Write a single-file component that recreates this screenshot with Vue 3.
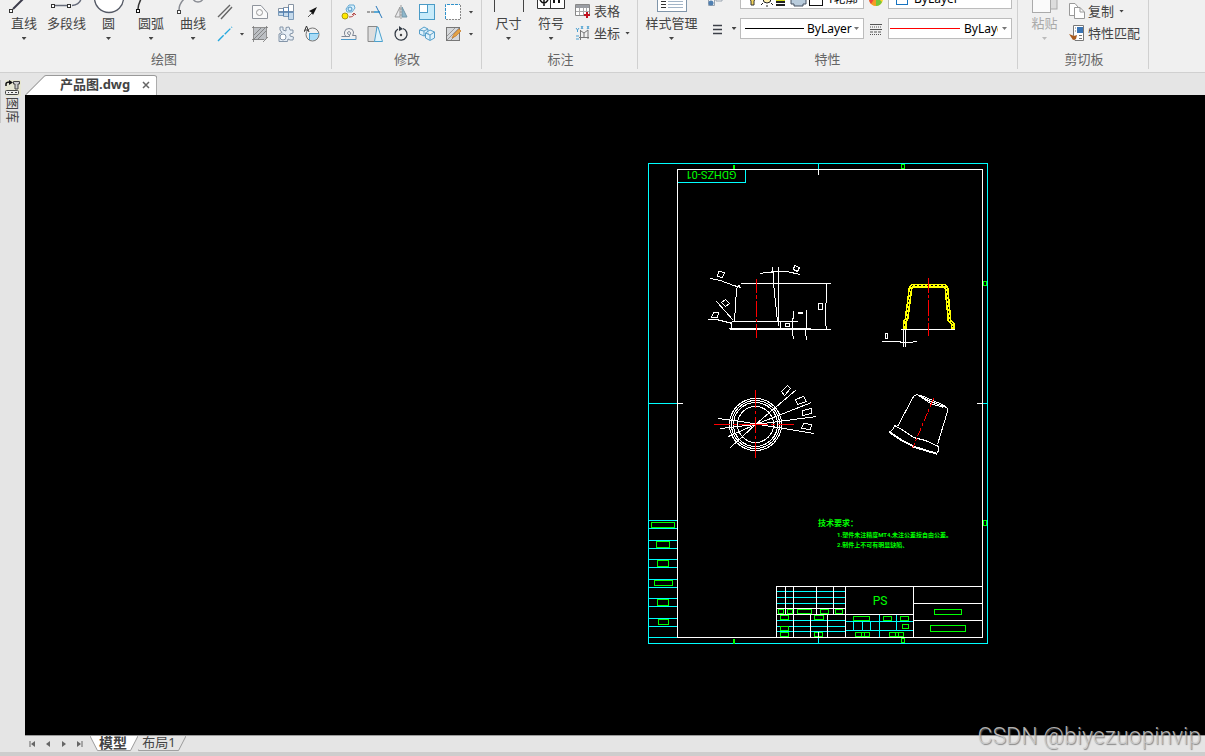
<script setup>
import { ref } from 'vue'

const lineWeight = ref('ByLayer')
const lineType = ref('ByLayer')
const color = ref('ByLayer')
const layer = ref('1轮廓')

const revisionLines = [520, 528, 540, 548, 559, 567, 579, 587, 598, 606, 618, 626, 637]

// Placeholder frames drawn for shrunken text: x, y, width, height
const frames = [
  [651, 522, 23, 5], [656, 541, 13, 6], [657, 560, 11, 6], [654, 580, 18, 5], [657, 599, 11, 6], [658, 619, 10, 5],
  [901, 164, 3, 4], [983, 281, 3, 4], [983, 520, 3, 5], [901, 638, 3, 4],
  [778, 609, 5, 4], [787, 609, 5, 4], [797, 609, 14, 4], [820, 609, 8, 4], [835, 609, 7, 4],
  [780, 615, 8, 4], [814, 615, 9, 4], [780, 626, 8, 4], [780, 632, 8, 4], [814, 632, 8, 4],
  [853, 616, 16, 4], [883, 616, 8, 4], [900, 616, 8, 4], [902, 624, 6, 4],
  [855, 632, 14, 4], [861, 632, 3, 4], [889, 632, 14, 4], [895, 632, 3, 4],
  [934, 609, 27, 5], [930, 625, 35, 6]
]
</script>

<template>
  <div class="app">
    <header class="ribbon">
      <section class="group draw">
        <div class="tools draw-tools">
          <button class="big" type="button">
            <svg class="big-icon" aria-hidden="true"><path d="M10 9 21 -2" stroke="#3b3b4a" stroke-width="2" /><rect x="9.500" y="9.500" width="3" height="3" transform="translate(-3 0)" fill="#fff" stroke="#333" /></svg>
            <span>直线</span><i class="arr"></i>
          </button>
          <button class="big" type="button">
            <svg class="big-icon" aria-hidden="true"><path d="M10 5.5H23M27 5.5C32 5 35 3 36 -1" fill="none" stroke="#666b7a" stroke-width="1.5" /><rect x="6.5" y="4.5" width="3" height="3" fill="#fff" stroke="#333" /><rect x="22.5" y="4.5" width="3" height="3" fill="#fff" stroke="#333" /></svg>
            <span>多段线</span>
          </button>
          <button class="big" type="button">
            <svg class="big-icon" aria-hidden="true"><circle cx="21" cy="-2" r="14.5" fill="#fff" stroke="#555a66" stroke-width="1.3" /></svg>
            <span>圆</span><i class="arr"></i>
          </button>
          <button class="big" type="button">
            <svg class="big-icon" aria-hidden="true"><path d="M9 9C9 6 10 3 12 -1" fill="none" stroke="#333" stroke-width="1.5" /><rect x="7.5" y="9.5" width="3" height="3" fill="#fff" stroke="#111" /></svg>
            <span>圆弧</span><i class="arr"></i>
          </button>
          <button class="big" type="button">
            <svg class="big-icon" aria-hidden="true"><path d="M6 10C6 5 8 2 11 -1M20 -1C22 3 28 3 30 -1" fill="none" stroke="#8a8d94" stroke-width="1.5" /><rect x="4.5" y="10.5" width="3" height="3" fill="#fff" stroke="#444" /></svg>
            <span>曲线</span><i class="arr"></i>
          </button>
          <div class="small-grid draw-grid">
            <button type="button" aria-label="平行线"><svg viewBox="0 0 16 16"><path d="M1 13 13 1M4 15 15 3" stroke="#666" stroke-width="1.4" /></svg></button>
            <span></span>
            <button type="button" aria-label="孔"><svg viewBox="0 0 16 16"><path d="M.5 1.500H9L15.500 9V14.500H.5Z" fill="#fafafa" stroke="#8f949c" /><circle cx="7.500" cy="8.500" r="3" fill="none" stroke="#999" /></svg></button>
            <button type="button" aria-label="轴"><svg viewBox="0 0 16 16"><path d="M.5 4.500H5.500V3.500H10.500V.5H15.500V7.500H.5Z" fill="#fff" stroke="#8794a3" /><path d="M.5 8.500H15.500V15.500H10.500V12.500H5.500V11.500H.5Z" fill="#c5daec" stroke="#7f9cb8" /><path d="M5.500 4V12M10.500 3V13M0 8H16" stroke="#5583b5" /></svg></button>
            <button type="button" aria-label="引线"><svg viewBox="0 0 16 16"><path d="M4 13 8 9" stroke="#555" /><path d="M13 3 5 7 7.500 8.500 9 11Z" fill="#111" /></svg></button>
            <button type="button" aria-label="构造线"><svg viewBox="0 0 16 16"><path d="M1 15 15 1" stroke="#23a8df" stroke-width="1.4" stroke-dasharray="8 1.500" /></svg></button>
            <button type="button" aria-label="更多绘图"><i class="arr"></i></button>
            <button type="button" aria-label="填充"><svg viewBox="0 0 16 16"><rect x="2" y="2" width="12" height="12" fill="#bcbfc3" /><path d="M1.500 0V16M14.500 0V12M0 1.500H16M0 13.500H12M2 9 9 2M2 13 13 2M6 13 14 5M11 16 16 11" stroke="#777" stroke-width=".8" /></svg></button>
            <button type="button" aria-label="齿轮"><svg viewBox="0 0 16 16"><path d="M2 1H5V4L8 5 8 1.500 11 1 12 4 15 4V7L12 8V10L15.500 11 15 14H12L10 13 9.500 15.500H1V8L4 6.500 2 4Z" fill="#e5edf5" stroke="#8495a8" /><circle cx="5" cy="11" r="3" fill="#fff" stroke="#8495a8" /></svg></button>
            <button type="button" aria-label="局部放大"><svg viewBox="0 0 16 16"><path d="M5 8H14V13Q9 16 5 13Z" fill="#a9dcf7" /><circle cx="8.500" cy="8.500" r="6.500" fill="none" stroke="#777" /><path d="M5 7.500H15M5.500 8V14" stroke="#49a1d1" /><path d="M0 6 2.500 0 5 6M1 4H4" fill="none" stroke="#333" /></svg></button>
          </div>
        </div>
        <h2>绘图</h2>
      </section>

      <section class="group modify">
        <div class="small-grid modify-grid">
          <button type="button" aria-label="复制对象"><svg viewBox="0 0 16 16"><path d="M6 8 5 5 8 1 13 1 14 4 11 8Z" fill="#d6effc" stroke="#65a9d2" /><circle cx="9" cy="5" r="2" fill="none" stroke="#4b94c4" /><circle cx="4" cy="12" r="3" fill="#ffe800" stroke="#a99b16" /><path d="M8 13Q13 13 13 10M11 11 13 9 15 11" fill="none" stroke="#b34747" /></svg></button>
          <button type="button" aria-label="延伸"><svg viewBox="0 0 16 16"><path d="M0 8H8" stroke="#555" stroke-dasharray="3 1" /><path d="M7 8H13" stroke="#2a93cf" stroke-width="1.500" /><path d="M9 2 15 14" stroke="#2878ba" /></svg></button>
          <button type="button" aria-label="镜像"><svg viewBox="0 0 16 16"><path d="M7 3V13H2Z" fill="#e9eaec" stroke="#999" /><path d="M9 3V13H14Z" fill="#8fb7cb" stroke="#7297a9" /><path d="M8 1V15" stroke="#999" stroke-dasharray="2 1" /></svg></button>
          <button type="button" aria-label="缩放"><svg viewBox="0 0 16 16"><rect x=".5" y=".5" width="15" height="15" fill="#c7ebfa" stroke="#4a9bc6" /><rect x=".5" y=".5" width="8" height="8" fill="#fff" stroke="#4a9bc6" /></svg></button>
          <button type="button" aria-label="选择"><svg viewBox="0 0 16 16"><path d="M1 1H15V15H1Z" fill="#fff" /><path d="M15.500 1V15.500H1" fill="none" stroke="#888" stroke-dasharray="2 1" /><path d="M.5 15V.5H15" fill="none" stroke="#2e91cb" stroke-dasharray="3 1" /></svg></button>
          <button type="button" aria-label="选择方式"><i class="arr"></i></button>
          <button type="button" aria-label="偏移"><svg viewBox="0 0 16 16"><path d="M.5 10.500H5Q3 9 3.500 6Q4 2.500 8 2.500Q12 2.500 12.500 6Q12.500 8 11.500 9.500H15V13.500H.5" fill="none" stroke="#7f8794" /><path d="M5 10.500H8.500V9Q6 8 6.500 6.500Q8 4.500 9.500 6.500Q10 8 8.500 9" fill="none" stroke="#7f8794" /><path d="M0 13.500H15" stroke="#4b98ca" /></svg></button>
          <button type="button" aria-label="拉伸"><svg viewBox="0 0 16 16"><path d="M1 .5H10V15.500H1Z" fill="#ddd" stroke="#888" /><path d="M10 1H11L15.500 15.500H7.500Z" fill="#dff3fc" stroke="#4ba0cd" /></svg></button>
          <button type="button" aria-label="旋转"><svg viewBox="0 0 16 16"><path d="M10 2.500A6 6 0 1 1 5 3" fill="none" stroke="#333b45" stroke-width="1.300" /><path d="M6 0 10 3 6 5Z" fill="#333b45" /><circle cx="8" cy="9" r="1.200" fill="#444" /></svg></button>
          <button type="button" aria-label="阵列"><svg viewBox="0 0 16 16"><path d="M.5 4 5 1 9 3V8L5 10 .5 8ZM.5 4 5 5 9 3M5 5V10" fill="#dff2fc" stroke="#579fc9" /><path d="M6.500 7 11 4 15.500 6V12L11 14.500 6.500 12ZM6.500 7 11 9 15.500 6M11 9V14" fill="#dff2fc" stroke="#579fc9" /></svg></button>
          <button type="button" aria-label="编辑填充"><svg viewBox="0 0 16 16"><rect x="1.500" y="1.500" width="13" height="13" fill="#d6d8da" stroke="#777" /><path d="M2 10 10 2M2 14 14 2M6 14 14 6" stroke="#999" /><path d="M7 12 9 8 14 3 16 5 11 10Z" fill="#e2a346" stroke="#c57827" stroke-width=".7" /></svg></button>
          <button type="button" aria-label="更多修改"><i class="arr"></i></button>
        </div>
        <h2>修改</h2>
      </section>

      <section class="group annotate">
        <div class="tools annotate-tools">
          <button class="big" type="button">
            <svg class="big-icon" aria-hidden="true"><path d="M7.500 0V12M36.500 0V12" stroke="#444" /></svg>
            <span>尺寸</span><i class="arr"></i>
          </button>
          <button class="big" type="button">
            <svg class="big-icon" aria-hidden="true"><path d="M7.500 -2V8.500H34.500V-2M20.500 0V8" fill="#fff" stroke="#333" /><path d="M10 0Q14 6 18 0M14 0V6" fill="none" stroke="#111" stroke-width="1.500" /><path d="M24 0V3M29 0V3" stroke="#111" stroke-width="2" /></svg>
            <span>符号</span><i class="arr"></i>
          </button>
          <div class="rows">
            <button class="labelled" type="button">
              <svg viewBox="0 0 16 16"><path d="M.5 1.500H14.500V12.500H.5Z" fill="#fff" stroke="#888" /><path d="M1 2H14V5H1Z" fill="#9a9da3" /><path d="M1 8.500H14M4.500 5V12M8.500 5V12M11.500 5V12" stroke="#aaa" /><path d="M9 12H15M12 9V15" stroke="#c1121f" stroke-width="2" /></svg>
              <span>表格</span>
            </button>
            <button class="labelled" type="button">
              <svg viewBox="0 0 16 16"><path d="M4 12.500H14M5.500 5V15M6 6 9 8 13 5M9 8V12M13 5V14" fill="none" stroke="#777" /><path d="M1 3 2.500 5 4 3M2.500 5V7M6 1 8 4M8 1 6 4M12 1 14 4M14 1 12 4M1 11H4M1 14H4" fill="none" stroke="#4b9fd0" /></svg>
              <span>坐标</span><i class="arr"></i>
            </button>
          </div>
        </div>
        <h2>标注</h2>
      </section>

      <section class="group props">
        <div class="tools props-tools">
          <button class="big" type="button">
            <svg class="big-icon" aria-hidden="true"><rect x="16.500" y="-5.500" width="29" height="17" fill="#fff" stroke="#7f95aa" /><path d="M20 1.500H25M20 4.500H25M20 7.500H25" stroke="#333" /><path d="M27 1.500H42M27 4.500H42M27 7.500H42" stroke="#a3b5c7" /></svg>
            <span>样式管理</span><i class="arr"></i>
          </button>
          <div class="prop-grid">
            <button type="button" aria-label="图层"><svg viewBox="0 0 16 16"><path d="M1.500 5V14.500H7.500V5M9 3.500H15V10H9Z" fill="#f6f6f6" stroke="#9aa5b1" /><circle cx="4" cy="12" r="2.500" fill="#4f7fb1" /></svg></button>
            <span></span>
            <label class="combo layer">
              <svg class="layer-icons" viewBox="0 0 80 16" aria-hidden="true"><path d="M3 5H12L9 10V14H6V10Z" fill="#f5d65a" stroke="#333" /><circle cx="22" cy="8" r="4" fill="#fff1b0" stroke="#222" /><path d="M16 14 18 12M28 14 26 12M22 14V16" stroke="#222" /><path d="M31 8H40M31 11H40M31 14H40" stroke="#222" stroke-width="2" /><path d="M31 9.500H40" stroke="#d2dc18" /><path d="M46 8H61V13H58V15H49V13H46Z" fill="#b9ccdc" stroke="#445160" /><rect x="64.500" y="1.500" width="13" height="13" fill="#fff" stroke="#111" /></svg>
              <select v-model="layer" aria-label="图层"><option>1轮廓</option></select>
            </label>
            <span class="icon-cell"><svg viewBox="0 0 16 16" aria-hidden="true"><circle cx="8" cy="8" r="7" fill="#ffd42a" /><path d="M8 5 14 11A7 7 0 0 1 8 15Z" fill="#75c53b" /><path d="M8 5 2 11A7 7 0 0 0 8 15Z" fill="#f49b24" /><path d="M8 5 1 8Q1 11 3 13Z" fill="#ef453d" /></svg></span>
            <label class="combo color">
              <i class="swatch"></i>
              <select v-model="color" aria-label="颜色"><option>ByLayer</option></select>
            </label>
            <button class="weight-button" type="button" aria-label="线宽"><svg viewBox="0 0 16 16"><path d="M4 4.500H13M4 8.500H13M4 12.500H13" stroke="#3c4048" stroke-width="1.300" /></svg></button>
            <button type="button" aria-label="线宽列表"><i class="arr"></i></button>
            <label class="combo weight">
              <i class="sample"></i>
              <select v-model="lineWeight" aria-label="线宽值"><option>ByLayer</option></select>
              <i class="arr soft"></i>
            </label>
            <span class="icon-cell"><svg viewBox="0 0 16 16" aria-hidden="true"><path d="M2 3.500H14M2 8.500H14" stroke="#555" /><path d="M2 6H14M2 13.500H14" stroke="#555" stroke-dasharray="1 1" /><path d="M2 11H14" stroke="#555" stroke-dasharray="3 1" /></svg></span>
            <label class="combo type">
              <i class="sample"></i>
              <select v-model="lineType" aria-label="线型"><option>ByLayer</option></select>
              <i class="arr soft"></i>
            </label>
          </div>
        </div>
        <h2>特性</h2>
      </section>

      <section class="group clip">
        <div class="tools clip-tools">
          <button class="big" type="button" disabled>
            <svg class="big-icon" aria-hidden="true"><rect x="27" y="-3" width="7" height="12" fill="#ddd" stroke="#aaa" /><rect x="9.500" y="-5.500" width="18" height="18" fill="#fafafa" stroke="#aaa" /></svg>
            <span>粘贴</span><i class="arr"></i>
          </button>
          <div class="rows">
            <button class="labelled" type="button">
              <svg viewBox="0 0 16 16"><path d="M.5 .5H6L9 4V12.500H.5Z" fill="#fff" stroke="#999" /><path d="M5.500 4.500H11L15.500 9V15.500H5.500Z" fill="#fff" stroke="#999" /><path d="M11 4.500V9H15" fill="none" stroke="#999" /></svg>
              <span>复制</span><i class="arr"></i>
            </button>
            <button class="labelled" type="button">
              <svg viewBox="0 0 16 16"><path d="M4.500 .5H14.500V15.500H6L4.500 10Z" fill="#fff" stroke="#777" /><path d="M8 2H14V8H8Z" fill="#3974b5" /><path d="M10 10.500H13M10 13.500H13M6 3H7M6 6H7" stroke="#777" /><path d="M0 9 5 11 8 10 7 14 4 15 2 12Z" fill="#a95b1f" /></svg>
              <span>特性匹配</span>
            </button>
          </div>
        </div>
        <h2>剪切板</h2>
      </section>
    </header>

    <div class="workspace">
      <aside class="side">
        <button class="side-tab" type="button">
          <svg viewBox="0 0 16 16" aria-hidden="true"><rect width="16" height="16" fill="#e7e7d2" /><path d="M1 6V4Q1 2 5 2" fill="none" stroke="#111" stroke-width="1.500" /><path d="M4 0 8 2.500 4 5Z" fill="#111" /><path d="M8.500 1.500H14.500V4H13V9H10V4H8.500Z" fill="#ccc" stroke="#444" /><rect x=".5" y="10.500" width="13" height="4" rx="1" fill="#eee" stroke="#444" /><path d="M3 12.500H4M6 12.500H8M10 12.500H12" stroke="#444" /></svg>
          <span>图库</span>
        </button>
      </aside>

      <main class="editor">
        <nav class="file-tabs">
          <div class="file-tab">
            <svg class="file-shape" viewBox="0 0 132 20" preserveAspectRatio="none" aria-hidden="true"><path d="M.5 20 19 1.500Q20 .5 21 .5H129Q131.500 .5 131.500 3V20" fill="#fff" stroke="#999" /></svg>
            <button class="file-name" type="button">产品图.dwg</button>
            <button class="close" type="button" aria-label="关闭"><svg viewBox="0 0 8 8"><path d="M1 1 7 7M7 1 1 7" stroke="#666" stroke-width="1.500" /></svg></button>
          </div>
        </nav>

        <div class="canvas">
          <svg class="drawing" viewBox="25 95 1180 640" preserveAspectRatio="xMinYMin meet" role="img" aria-label="产品图">
            <g transform="translate(0.5 0.5)" fill="none" shape-rendering="crispEdges">
              <g stroke="#00ffff">
                <rect x="648" y="163" width="339" height="480" />
                <path d="M677 182H745V169M818 163V169M818 637V643M648 403H677M982 403H987" />
                <path v-for="y in revisionLines" :key="y" :d="`M648 ${y}H677`" />
                <path d="M776 591H845M776 597H845M776 603H845M776 620H845M776 626H845M776 631H845M845 621H913M845 630H913M853 621V630M862 621V630M870 621V630M879 614V637M896 614V630" />
              </g>
              <g stroke="#00ff00">
                <rect v-for="(f, i) in frames" :key="i" :x="f[0]" :y="f[1]" :width="f[2]" :height="f[3]" />
                <path d="M733 164V169M734 164V169M733 638V643M734 638V643" />
              </g>
              <g stroke="#fff">
                <rect x="677" y="169" width="305" height="468" />
                <path d="M818 169V174M818 631V637M677 403H682M976 403H982" />
                <path d="M776 637V586H982M845 586V637M913 586V637M776 608H845M776 614H913M785 586V614M793 586V637M816 586V614M833 586V614M810 614V637M827 614V637M913 603H982M913 620H982" />

                <path d="M740 283H830M740 284 737 286 736 289 734 321M731 321H797M731 321V328M729 329H830M728 328H810M780 321V329M778 266V325M773 283 777 321M772 266V272M773 271V283M826 283V300L825 306V322L826 329M793 310V316L792 320V331L793 339M806 309V325L805 331 806 340M797 313H802M797 312H802" />
                <path d="M760 273 765 272H770L772 271H786L800 274M710 278 720 280 733 285 741 287M716 301 733 320M707 319H716L732 323M794 265 799 267 797 271 793 269ZM718 271 724 272 722 277 717 276ZM725 299 729 303 725 306 721 302ZM713 312H718L717 317H711Z" />
                <rect x="785" y="323" width="4" height="3" />
                <rect x="818" y="303" width="4" height="6" />

                <circle cx="755" cy="424" r="26" /><circle cx="755" cy="424" r="24" /><circle cx="755" cy="424" r="22" /><circle cx="755" cy="424" r="18" />
                <path d="M718 418 740 421 814 433M720 428 755 424 816 416M728 436 755 424 811 402M730 447 755 424 796 389M781 391 787 385 790 388 784 395ZM795 399 803 396 806 401 797 404ZM802 410 811 408 811 413 802 415ZM803 423 811 424 810 429 801 428Z" />

                <path d="M900 329H954M903 329V346M905 329V346M881 341H897L903 342H909L917 341" />
                <rect x="885" y="333" width="2" height="5" />
                <path d="M897 426 913 396 916 394 923 396 944 405 947 408V411L937 444M918 395 930 401 946 407M921 397 930 403 943 407M894 425 903 430 913 437 925 440 938 446V449L937 453M894 425 892 430 889 431 899 438 914 446 937 453M889 432 899 439 914 447 937 454" />
              </g>
              <path d="M904 328V321L906 319 910 288 912 285H944L946 288 949 320 952 323V328" stroke="#ffff00" stroke-width="4" />
              <path d="M904 325V321L906 319 910 288 912 285H944L946 288 949 320 952 323V326" stroke="#000" stroke-dasharray="2 2" />
              <g stroke="#ff0000">
                <path d="M756 278V292M756 294V298M756 300V316M756 318V321M756 323V337" />
                <path d="M928 277V292M928 294V297M928 299V315M928 317V320M928 322V335" />
                <path d="M755 389V407M755 410V413M755 416V432M755 435V438M755 441V457M713 424H729M732 424H736M738 424H767M770 424H774M777 424H793" />
                <path d="M933 398 912 448" stroke-dasharray="9 2 3 2" />
              </g>
            </g>
            <g class="cad-text">
              <text class="code" transform="rotate(180 711 175)" x="711" y="179" text-anchor="middle">GDHZS-01</text>
              <text class="material" x="880" y="605" text-anchor="middle">PS</text>
              <text class="note-title" x="818" y="526">技术要求：</text>
              <text class="note" x="837" y="537">1.塑件未注精度MT4,未注公差按自由公差。</text>
              <text class="note" x="837" y="547">2.制件上不可有明显缺陷、</text>
            </g>
          </svg>
        </div>

        <nav class="sheets">
          <div class="pager">
            <button type="button" aria-label="第一页"><svg viewBox="0 0 8 8"><path d="M1 1V7" stroke="#666" /><path d="M6 1V7L2 4Z" fill="#666" /></svg></button>
            <button type="button" aria-label="上一页"><svg viewBox="0 0 8 8"><path d="M6 1V7L2 4Z" fill="#666" /></svg></button>
            <button type="button" aria-label="下一页"><svg viewBox="0 0 8 8"><path d="M2 1V7L6 4Z" fill="#666" /></svg></button>
            <button type="button" aria-label="最后一页"><svg viewBox="0 0 8 8"><path d="M7 1V7" stroke="#666" /><path d="M2 1V7L6 4Z" fill="#666" /></svg></button>
          </div>
          <button class="sheet active" type="button">
            <svg viewBox="0 0 48 17" preserveAspectRatio="none" aria-hidden="true"><path d="M0 0 7.500 15.500H40.500L48 0" fill="#fff" stroke="#999" /></svg>
            <span>模型</span>
          </button>
          <button class="sheet" type="button">
            <svg viewBox="0 0 48 17" preserveAspectRatio="none" aria-hidden="true"><path d="M-3 8 .5 15.500H40.500L48 0" fill="none" stroke="#999" /></svg>
            <span>布局1</span>
          </button>
        </nav>
      </main>
    </div>
    <footer class="edge"></footer>
    <div class="mark">CSDN @biyezuopinvip</div>
  </div>
</template>

<style>
body {
  background: #e5e5e5;
  overflow: hidden;
}
</style>

<style scoped>
.app {
  position: relative;
  display: flex;
  flex-direction: column;
  height: 100vh;
  overflow: hidden;
  background: #e5e5e5;
  color: #444;
  font: 13px/16px "Noto Sans", "Noto Sans CJK SC", sans-serif;
}
* {
  box-sizing: border-box;
}
button {
  padding: 0;
  border: 0;
  background: none;
  color: inherit;
  font: inherit;
}
svg {
  display: block;
}
.ribbon {
  display: flex;
  flex: none;
  height: 73px;
  overflow: hidden;
  border-bottom: 1px solid #d0d0d0;
  background: #f0f0f0;
}
.group {
  display: flex;
  flex: none;
  flex-direction: column;
  justify-content: space-between;
  height: 69px;
  padding: 0 3px;
  border-right: 1px solid #d0d0d0;
}
.draw { width: 332px; padding-right: 6px; }
.modify { width: 150px; padding-left: 4px; }
.annotate { width: 156px; padding-left: 5px; }
.props { width: 380px; }
.clip { width: 131px; padding-left: 5px; }
h2 {
  margin: 0;
  padding-bottom: 2px;
  color: #666;
  font-size: 13px;
  font-weight: 400;
  line-height: 16px;
  text-align: center;
}
.tools {
  display: grid;
}
.draw-tools { grid-template-columns: 42px 43px 41px 44px 40px auto; }
.annotate-tools { grid-template-columns: 43px 42px auto; }
.props-tools { grid-template-columns: 61px auto; }
.clip-tools { grid-template-columns: 43px auto; }
.big {
  display: flex;
  flex-direction: column;
  align-items: center;
  height: 45px;
  white-space: nowrap;
}
.big:disabled {
  color: #aaa;
}
.big-icon {
  flex: none;
  width: 100%;
  height: 15px;
  overflow: hidden;
}
.big .arr {
  margin-top: 6px;
}
.arr {
  flex: none;
  width: 5px;
  height: 3px;
  background: #444;
  clip-path: polygon(0 0, 100% 0, 50% 100%);
}
.big:disabled .arr {
  background: #bbb;
}
.soft {
  background: #777;
}
.small-grid {
  display: grid;
  grid-template-rows: 22px 22px;
  padding-top: 1px;
}
.draw-grid { grid-template-columns: 24px 10px 26px 26px 26px; }
.modify-grid { grid-template-columns: repeat(5, 26px) 10px; }
.small-grid button,
.prop-grid button,
.icon-cell {
  display: flex;
  align-items: center;
  justify-content: center;
}
.small-grid svg,
.labelled svg,
.prop-grid button svg,
.icon-cell svg {
  flex: none;
  width: 16px;
  height: 16px;
}
.rows {
  display: grid;
  grid-template-rows: 22px 22px;
  align-content: start;
  padding-left: 3px;
}
.labelled {
  display: flex;
  align-items: center;
  gap: 3px;
  white-space: nowrap;
}
.labelled .arr {
  margin-left: 2px;
}
.prop-grid {
  display: grid;
  grid-template-columns: 26px 12px 124px 24px 124px;
  grid-template-rows: 21px 21px;
  row-gap: 9px;
  margin-top: -12px;
}
.prop-grid .weight-button {
  padding-left: 3px;
}
.combo {
  display: flex;
  align-items: center;
  padding: 0 4px;
  border: 1px solid #bcbcbc;
  background: #fff;
}
.combo select {
  flex: 1;
  min-width: 0;
  padding: 0;
  border: 0;
  appearance: none;
  background: none;
  color: #000;
  font: 12px/16px "Noto Sans", "Noto Sans CJK SC", sans-serif;
}
.sample {
  flex: none;
  width: 59px;
  height: 1px;
  margin-right: 3px;
  background: #000;
}
.type {
  padding-left: 1px;
}
.type .sample {
  width: 70px;
  margin-right: 4px;
  background: #f00;
}
.type select {
  flex: none;
  width: 34px;
  overflow: hidden;
  text-overflow: clip;
}
.type .arr {
  margin-left: auto;
}
.layer-icons {
  flex: none;
  width: 80px;
  height: 16px;
  margin-right: 2px;
}
.swatch {
  width: 12px;
  height: 12px;
  margin: 0 6px 0 3px;
  border: 1px solid #1673c0;
}
.workspace {
  display: flex;
  flex: 1;
  min-height: 0;
}
.side {
  flex: none;
  width: 25px;
  padding-top: 7px;
}
.side-tab {
  display: flex;
  flex-direction: column;
  align-items: center;
  width: 22px;
  padding-left: 2px;
  border-left: 1px solid #c8c8c8;
}
.side-tab svg {
  width: 16px;
  height: 16px;
}
.side-tab span {
  margin-top: 1px;
  font-size: 13px;
  line-height: 14px;
  writing-mode: vertical-rl;
  text-orientation: sideways;
}
.editor {
  display: flex;
  flex: 1;
  flex-direction: column;
  min-width: 0;
}
.file-tabs {
  flex: none;
  display: flex;
  align-items: flex-end;
  height: 22px;
}
.file-tab {
  position: relative;
  display: flex;
  align-items: center;
  gap: 12px;
  height: 20px;
  padding: 0 7px 0 35px;
}
.file-shape {
  position: absolute;
  inset: 0;
  width: 100%;
  height: 100%;
}
.file-name,
.close {
  position: relative;
}
.file-name {
  padding-bottom: 2px;
  font-weight: 700;
}
.close svg {
  width: 8px;
  height: 8px;
}
.canvas {
  flex: 1;
  min-height: 0;
  background: #000;
}
.drawing {
  width: 100%;
  height: 100%;
}
.cad-text {
  fill: #0f0;
  font-family: Roboto, "Noto Sans CJK SC", sans-serif;
}
.code { font-size: 11px; }
.material { font-size: 12px; }
.note-title { font-size: 8px; font-weight: 700; }
.note { font-size: 6px; font-weight: 700; }
.sheets {
  display: flex;
  flex: none;
  height: 17px;
  border-top: 1px solid #999;
}
.pager {
  display: flex;
  align-items: center;
  width: 65px;
  padding-right: 3px;
}
.pager button {
  display: flex;
  justify-content: center;
  width: 16px;
}
.pager svg {
  width: 8px;
  height: 8px;
}
.sheet {
  position: relative;
  width: 48px;
  padding: 0 6px 3px 0;
  line-height: 13px;
  white-space: nowrap;
}
.sheet svg {
  position: absolute;
  inset: 0;
  width: 100%;
  height: 100%;
}
.sheet span {
  position: relative;
}
.active {
  padding-right: 2px;
  font-size: 14px;
  font-weight: 700;
}
.edge {
  flex: none;
  height: 4px;
  background: #cdcdcd;
}
.mark {
  position: absolute;
  right: 4px;
  bottom: 5px;
  color: rgba(205, 205, 205, 0.85);
  font: 300 23px/28px Roboto, sans-serif;
  text-shadow: 1px 1px 1px rgba(110, 110, 110, 0.8);
  pointer-events: none;
}
</style>
